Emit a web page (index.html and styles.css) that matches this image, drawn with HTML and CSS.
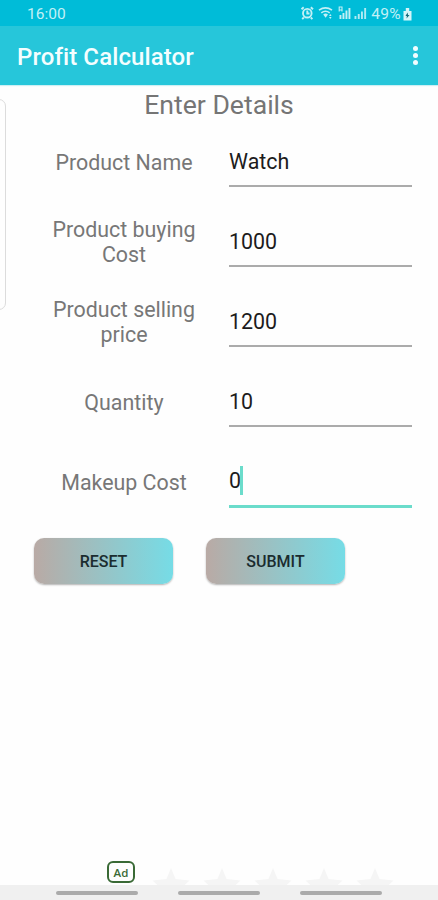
FILE: index.html
```html
<!DOCTYPE html>
<html lang="en">
<head>
<meta charset="utf-8">
<title>Profit Calculator</title>
<link rel="stylesheet" href="styles.css">
</head>
<body>
<div class="screen">
  <header class="status">
    <span class="time">16:00</span>
    <svg class="status-icons" width="69" height="16" viewBox="0 0 69 16">
      <g fill="none" stroke="#c3f0f6" stroke-width="1.9">
        <circle cx="7.3" cy="8.2" r="4.3"/>
        <path d="M7.3 5.5v3h2.2M1.500 4.200l2.200-2M13 4.200l-2.200-2M3.800 12.500l-1.600 1.600M10.800 12.500l1.600 1.600"/>
        <path d="M19 5.200q6.500-4.600 13 0M21.300 7.800q4.200-3.200 8.400 0" stroke-width="1.600"/>
        <path d="M39.200 1.500v5M42 1.500v5M39 2h3M39 5h3" stroke-width="1.100"/>
      </g>
      <g fill="#c3f0f6">
        <path d="M23.200 9.500q2.400-1.800 4.800 0l-2.400 3.300zM29 11l1.300-2 1.300 2zM29 12l1.300 2 1.300-2z"/>
        <path d="M39.500 10h1.900v4h-1.900zM42.500 8h1.900v6h-1.900zM45.500 5.500h1.900V14h-1.900zM48.500 3h1.900v11h-1.900z"/>
        <path d="M54.500 11h1.900v3h-1.900zM57.800 9h1.900v5h-1.900zM61 6.500h1.900V14H61zM64.200 3h1.900v11h-1.900z" opacity=".9"/>
      </g>
    </svg>
    <span class="percent">49%</span>
    <svg class="battery" width="9" height="13" viewBox="0 0 9 13">
      <path d="M2.800 0h3.400v3H8.500v9.500H.5V3h2.300z" fill="#d5f5f9"/>
      <path d="M4.600 4.500L2.500 8h1.400L3.500 10.500 6.500 7H5z" fill="#126a79"/>
    </svg>
  </header>
  <div class="appbar">
    <h1 class="title">Profit Calculator</h1>
    <div class="menu"><i></i><i></i><i></i></div>
  </div>
  <main class="content">
    <div class="edge-panel"></div>
    <h2 class="heading">Enter Details</h2>
    <div class="row"><div class="label">Product Name</div><div class="field">Watch</div></div>
    <div class="row"><div class="label">Product buying<br>Cost</div><div class="field">1000</div></div>
    <div class="row"><div class="label">Product selling<br>price</div><div class="field">1200</div></div>
    <div class="row"><div class="label">Quantity</div><div class="field">10</div></div>
    <div class="row"><div class="label">Makeup Cost</div><div class="field focused">0<span class="caret"></span></div></div>
    <div class="actions">
      <button class="btn" type="button">RESET</button>
      <button class="btn" type="button">SUBMIT</button>
    </div>
  </main>
  <div class="ad-strip">
    <span class="ad">Ad</span>
    <svg class="stars" width="260" height="18" viewBox="0 0 260 18" fill="#f5f5f5">
      <path id="star" d="M26 0l4.500 11 14 1.500-6 5.500H13.500l-6-5.500 14-1.500z"/>
      <use href="#star" x="51"/><use href="#star" x="102"/><use href="#star" x="153"/><use href="#star" x="204"/>
    </svg>
  </div>
  <nav class="navbar"><i></i><i></i><i></i></nav>
</div>
</body>
</html>
```

FILE: styles.css
```css
* { box-sizing: border-box; }
body { margin: 0; font-family: Roboto, sans-serif; background: #fefefe; }
.screen { width: 438px; height: 900px; display: flex; flex-direction: column; overflow: hidden; }
.status {
  height: 26px; flex: none; display: flex; align-items: center;
  padding: 2px 26px 0 27px; background: #00bcd8; color: #c3f0f6;
}
.time { font-size: 15.500px; margin-right: auto; }
.status-icons { margin-right: 2px; margin-top: -2px; }
.percent { font-size: 15.500px; letter-spacing: .3px; }
.battery { margin-left: 2px; }
.appbar {
  height: 59px; flex: none; display: flex; align-items: center; justify-content: space-between;
  padding: 3px 20px 0 17px; background: #26c6da; box-shadow: 0 1px 1px #cdeff4;
}
.title { margin: 0; font-size: 24px; font-weight: 500; color: #f4feff; letter-spacing: .1px; }
.menu { display: flex; flex-direction: column; gap: 2px; padding-bottom: 3px; }
.menu i { width: 5px; height: 5px; border-radius: 50%; background: #f2fdff; }
.content { flex: 1; position: relative; }
.edge-panel {
  position: absolute; left: -12px; top: 14px; width: 18px; height: 211px;
  border: 1px solid #dcdcdc; border-radius: 7px;
}
.heading {
  margin: 0; height: 37px; padding-top: 4px; text-align: center; color: #757575;
  font-size: 26.600px; line-height: 32px; font-weight: 400;
}
.row { height: 80px; display: flex; align-items: center; padding: 0 26px 0 19px; }
.label { width: 210px; text-align: center; color: #777; font-size: 21.400px; line-height: 25px; }
.field {
  width: 183px; height: 50px; display: flex; align-items: center; color: #1c1c1c;
  font-size: 21.400px; border-bottom: 2px solid #ababab;
}
.focused { height: 52px; border-bottom: 3px solid #6bdccb; }
.caret { width: 3px; height: 29px; margin-left: -1px; background: #6bdccb; }
.actions { display: flex; gap: 33px; padding: 16px 0 0 34px; }
.btn {
  width: 139px; height: 46px; border: 0; border-radius: 10px; padding: 0;
  background: linear-gradient(90deg, #b9aaa5, #76dce6);
  box-shadow: 0 1px 2px rgba(0, 0, 0, .3);
  font: 500 16px Roboto, sans-serif; color: #1b2c2f;
}
.ad-strip { height: 24px; flex: none; display: flex; align-items: flex-start; padding-left: 107px; }
.ad {
  width: 28px; height: 22px; border: 2px solid #3a6a36; border-radius: 6px;
  color: #3a6a36; font: 600 11.500px/19px "Open Sans", sans-serif; text-align: center;
}
.stars { margin: 7px 0 0 10px; }
.navbar {
  height: 15px; flex: none; display: flex; gap: 40px; padding: 6px 0 0 56px; background: #f0f0f0;
}
.navbar i { width: 82px; height: 4px; border-radius: 2px; background: #ababab; }
```
